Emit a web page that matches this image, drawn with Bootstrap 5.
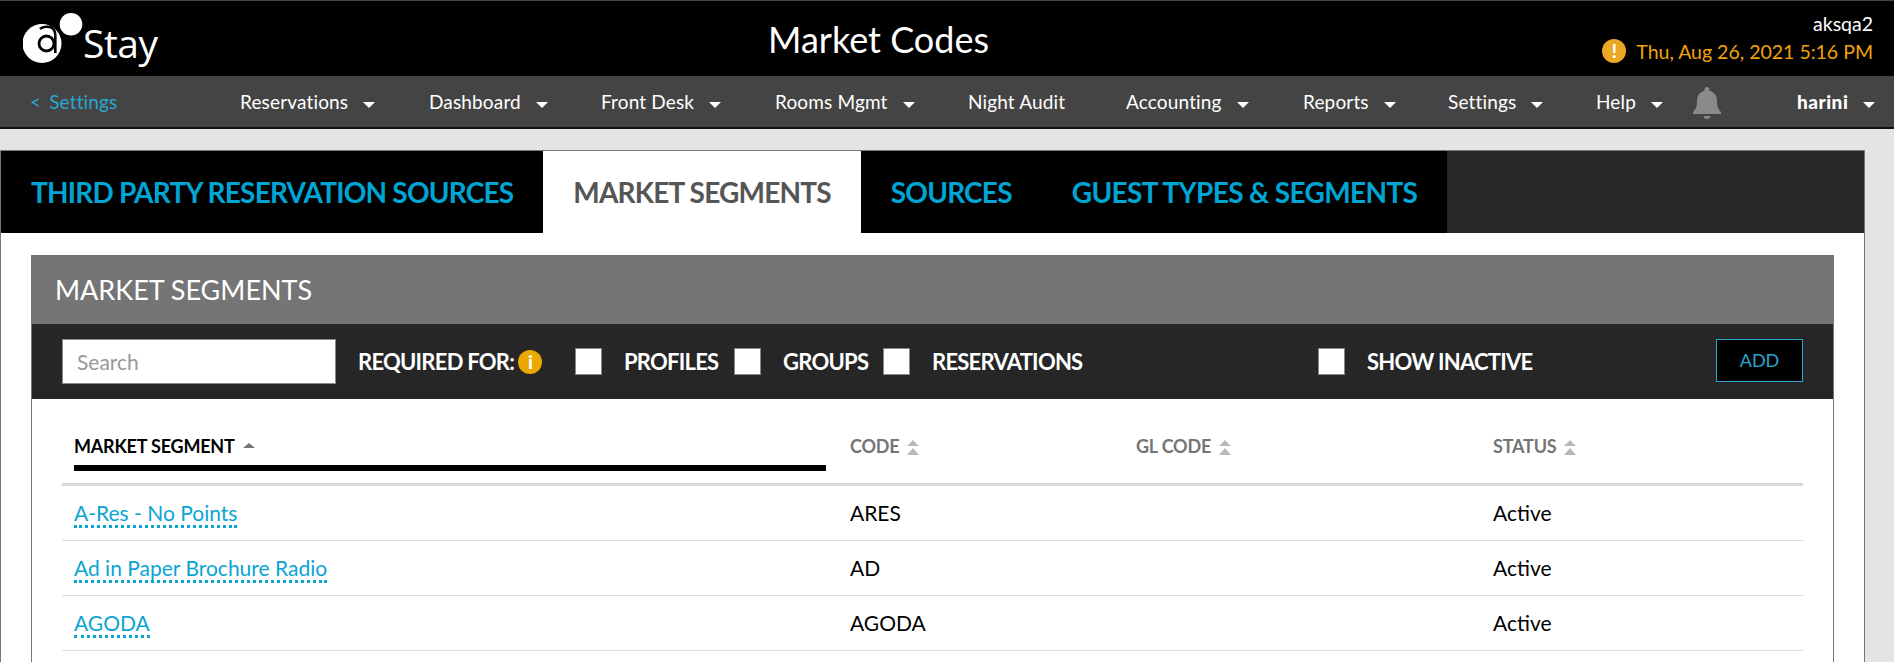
<!DOCTYPE html>
<html lang="en">
<head>
<meta charset="utf-8">
<title>Market Codes</title>
<link href="https://cdn.jsdelivr.net/npm/bootstrap@5.3.0/dist/css/bootstrap.min.css" rel="stylesheet">
<style>
html,body{height:100%;overflow:hidden}
body{background:#e4e4e4;font-family:Lato,"Liberation Sans",sans-serif;color:#000}
.app-shell{height:662px}
.top-bar{height:76px;background:#000;border-top:1px solid #444;color:#fff}
.brand-zone{width:768px;padding-left:23px}
.brand-svg{margin-top:9px;flex:none}
.brand-word{font-family:"Open Sans",sans-serif;font-size:39px;line-height:1;color:#fff;margin-left:0;margin-top:22px;letter-spacing:-.5px}
.page-title{font-size:36px;line-height:44px;margin:16px 0 0;font-weight:400}
.acct-zone{margin-left:auto;padding:11px 21px 0 0;text-align:right}
.acct-name{font-size:19.5px;line-height:24px}
.acct-date{font-size:19.5px;line-height:28px;color:#f0a30a;margin-top:2px}
.warn-dot{width:24px;height:24px;border-radius:50%;background:#eba824;color:#fff;font-weight:900;font-size:18px;line-height:24px;text-align:center;margin-right:10px;margin-top:-2px}
.menu-bar{height:53px;background:#444;border-bottom:2px solid #111;color:#fff;font-size:19px;line-height:51px;display:grid;grid-template-columns:210px 189px 172px 174px 193px 158px 177px 145px 148px 97px 104px 1fr;padding-left:30px;letter-spacing:.15px}
.back-lnk{color:#2ba6cf;text-decoration:none;word-spacing:3px}
.menu-item{white-space:nowrap;color:#fff;text-decoration:none}
.menu-item b{font-weight:900;letter-spacing:.5px}
.caret-dn{display:inline-block;border:6px solid transparent;border-top:6px solid #fff;border-bottom:0;margin-left:15px;vertical-align:1px}
.bell-ico{margin-top:11px;display:block}
.frame-box{margin:21px 29px 0 0;background:#fff;border:1px solid #777;border-bottom:0}
.tab-strip{background:#282828;height:82px}
.tab-group{background:#000}
.tab-lnk{font-size:28px;font-weight:700;color:#00a5d4;text-decoration:none;line-height:82px;padding:0 30px;letter-spacing:-.8px;white-space:nowrap}
.tab-lnk:last-child{letter-spacing:-.64px}
.tab-lnk.is-on{background:#fff;color:#555}
.inner-box{margin:22px 30px 0;border:1px solid #777;border-width:0 1px;height:407px}
.box-title{background:#757575;color:#fff;font-size:27px;height:69px;line-height:69px;padding-left:24px;margin:0 -1px}
.tool-row{height:75px;background:#262626;color:#fff;padding:15px 0 0 30px;font-weight:700;font-size:22px;letter-spacing:-.75px;display:grid;grid-template-columns:296px 160px 57px 49px 110px 49px 100px 49px 386px 49px 349px 87px;align-items:center;grid-template-rows:45px}
.search-box{width:274px;height:45px;border:1px solid #888;background:#fff;padding:0 14px;font-size:21px;letter-spacing:0;font-weight:400;color:#333;font-family:Lato,sans-serif}
.search-box::placeholder{color:#999}
.tick-box{width:27px;height:27px;background:#fff;border:1px solid #888;display:block}
.tool-lbl{white-space:nowrap}
.info-dot{width:24px;height:24px;border-radius:50%;background:#eba800;color:#fff;text-align:center;line-height:24px;font-size:19px;font-weight:900}
.add-btn{width:87px;height:43px;align-self:start;background:#000;color:#2ba6cf;border:1px solid #2ba6cf;border-radius:0;font-size:18px;padding:0;line-height:41px}
.seg-table{margin:0 30px;width:1741px;table-layout:fixed;border-collapse:separate;border-spacing:0}
.w-a{width:776px}.w-b{width:286px}.w-c{width:357px}.w-d{width:322px}
.seg-table th{height:87px;padding:34px 12px 0;vertical-align:top;font-size:18px;line-height:27px;font-weight:700;color:#757575;letter-spacing:-.2px;border-bottom:3px solid #d9d9d9}
.seg-table th.on-sort{color:#000}
.sort-bar{display:block;height:6px;background:#000;margin-top:5px}
.seg-table td{height:55px;padding:0 12px;font-size:21px;border-bottom:1px solid #ddd}
.seg-lnk{color:#0aa5d2;text-decoration:none;border-bottom:3px dotted #0aa5d2}
.sort-ico{display:inline-block;width:12px;height:15px;margin-left:8px;vertical-align:-2px}
.on-sort .sort-ico{margin-left:5px}
</style>
</head>
<body>
<div class="app-shell d-flex flex-column">
  <header class="top-bar d-flex">
    <div class="brand-zone d-flex">
      <svg class="brand-svg" width="60" height="55" viewBox="23 10 60 55" aria-hidden="true">
        <circle cx="42" cy="43.500" r="19.500" fill="#fff"/>
        <circle cx="71" cy="24.300" r="11.300" fill="#fff"/>
        <circle cx="46.500" cy="43.500" r="7.500" fill="none" stroke="#000" stroke-width="2.800"/>
        <path d="M40 29c3-2.500 9-3 12-1 2.500 1.700 3.300 4 3.300 7.500V53" fill="none" stroke="#000" stroke-width="2.600"/>
      </svg>
      <span class="brand-word">Stay</span>
    </div>
    <h1 class="page-title">Market Codes</h1>
    <div class="acct-zone">
      <div class="acct-name">aksqa2</div>
      <div class="acct-date d-flex align-items-center"><span class="warn-dot">!</span>Thu, Aug 26, 2021 5:16 PM</div>
    </div>
  </header>
  <nav class="menu-bar">
    <a class="back-lnk" href="#">&lt; Settings</a>
    <a class="menu-item" href="#">Reservations<i class="caret-dn"></i></a>
    <a class="menu-item" href="#">Dashboard<i class="caret-dn"></i></a>
    <a class="menu-item" href="#">Front Desk<i class="caret-dn"></i></a>
    <a class="menu-item" href="#">Rooms Mgmt<i class="caret-dn"></i></a>
    <a class="menu-item" href="#">Night Audit</a>
    <a class="menu-item" href="#">Accounting<i class="caret-dn"></i></a>
    <a class="menu-item" href="#">Reports<i class="caret-dn"></i></a>
    <a class="menu-item" href="#">Settings<i class="caret-dn"></i></a>
    <a class="menu-item" href="#">Help<i class="caret-dn"></i></a>
    <svg class="bell-ico" width="28" height="32" viewBox="0 0 28 32" aria-hidden="true"><path d="M14 0c1.500 0 2.500 1 2.500 2.500v1.200c5 1.300 7.500 5 7.500 10.300 0 6 1.500 8.500 4 11v2H0v-2c2.500-2.500 4-5 4-11C4 8.700 6.500 5 11.500 3.700V2.500C11.500 1 12.500 0 14 0z" fill="#8a8a8a"/><path d="M10.500 29h7c0 1.800-1.500 3-3.500 3s-3.500-1.200-3.500-3z" fill="#8a8a8a"/></svg>
    <a class="menu-item" href="#"><b>harini</b><i class="caret-dn"></i></a>
  </nav>
  <main class="frame-box flex-grow-1">
    <div class="tab-strip d-flex">
      <div class="tab-group d-flex">
        <a class="tab-lnk" href="#">THIRD PARTY RESERVATION SOURCES</a>
        <a class="tab-lnk is-on" href="#">MARKET SEGMENTS</a>
        <a class="tab-lnk" href="#">SOURCES</a>
        <a class="tab-lnk" href="#">GUEST TYPES &amp; SEGMENTS</a>
      </div>
    </div>
    <section class="inner-box">
      <div class="box-title">MARKET SEGMENTS</div>
      <div class="tool-row">
        <input class="search-box" placeholder="Search" aria-label="Search">
        <span class="tool-lbl">REQUIRED FOR:</span>
        <span class="info-dot">i</span>
        <span class="tick-box"></span>
        <span class="tool-lbl">PROFILES</span>
        <span class="tick-box"></span>
        <span class="tool-lbl">GROUPS</span>
        <span class="tick-box"></span>
        <span class="tool-lbl">RESERVATIONS</span>
        <span class="tick-box"></span>
        <span class="tool-lbl">SHOW INACTIVE</span>
        <button class="add-btn btn" type="button">ADD</button>
      </div>
      <table class="seg-table">
        <colgroup><col class="w-a"><col class="w-b"><col class="w-c"><col class="w-d"></colgroup>
        <thead>
          <tr>
            <th class="on-sort">MARKET SEGMENT <svg class="sort-ico" viewBox="0 0 12 15" aria-hidden="true"><path d="M6 3l6 5H0z" fill="#757575"/></svg><span class="sort-bar"></span></th>
            <th>CODE<svg class="sort-ico" viewBox="0 0 12 15" aria-hidden="true"><path d="M6 0l6 6H0zM6 8l6 7H0z" fill="#b8b8b8"/></svg></th>
            <th>GL CODE<svg class="sort-ico" viewBox="0 0 12 15" aria-hidden="true"><path d="M6 0l6 6H0zM6 8l6 7H0z" fill="#b8b8b8"/></svg></th>
            <th>STATUS<svg class="sort-ico" viewBox="0 0 12 15" aria-hidden="true"><path d="M6 0l6 6H0zM6 8l6 7H0z" fill="#b8b8b8"/></svg></th>
          </tr>
        </thead>
        <tbody>
          <tr><td><a class="seg-lnk" href="#">A-Res - No Points</a></td><td>ARES</td><td></td><td>Active</td></tr>
          <tr><td><a class="seg-lnk" href="#">Ad in Paper Brochure Radio</a></td><td>AD</td><td></td><td>Active</td></tr>
          <tr><td><a class="seg-lnk" href="#">AGODA</a></td><td>AGODA</td><td></td><td>Active</td></tr>
        </tbody>
      </table>
    </section>
  </main>
</div>
<script src="https://cdn.jsdelivr.net/npm/bootstrap@5.3.0/dist/js/bootstrap.bundle.min.js"></script>
</body>
</html>
